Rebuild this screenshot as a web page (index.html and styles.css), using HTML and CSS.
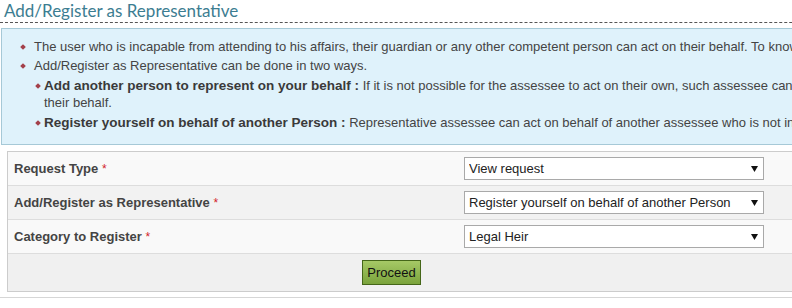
FILE: index.html
```html
<!DOCTYPE html>
<html lang="en">
<head>
<meta charset="utf-8">
<title>Add/Register as Representative</title>
<link rel="stylesheet" href="styles.css">
</head>
<body>
<div class="page">
  <h2 class="title">Add/Register as Representative</h2>
  <div class="info">
    <ul class="points">
      <li><div class="txt">The user who is incapable from attending to his affairs, their guardian or any other competent person can act on their behalf. To know more click here.</div></li>
      <li><div class="txt">Add/Register as Representative can be done in two ways.
        <ul class="sub">
          <li><div class="txt"><b>Add another person to represent on your behalf :</b> If it is not possible for the assessee to act on their own, such assessee can authorize another person to act on their behalf.</div></li>
          <li><div class="txt"><b>Register yourself on behalf of another Person :</b> Representative assessee can act on behalf of another assessee who is not in a position to act on their own.</div></li>
        </ul>
      </div></li>
    </ul>
  </div>

  <form class="form">
    <div class="row">
      <label class="lbl" for="reqType">Request Type <span class="req">*</span></label>
      <div class="sel">
        <select id="reqType"><option>View request</option></select>
        <svg class="arrow" width="7" height="6" viewBox="0 0 7 6"><polygon points="0,0 7,0 3.5,6" fill="#111"/></svg>
      </div>
    </div>
    <div class="row alt">
      <label class="lbl" for="addReg">Add/Register as Representative <span class="req">*</span></label>
      <div class="sel">
        <select id="addReg"><option>Register yourself on behalf of another Person</option></select>
        <svg class="arrow" width="7" height="6" viewBox="0 0 7 6"><polygon points="0,0 7,0 3.5,6" fill="#111"/></svg>
      </div>
    </div>
    <div class="row">
      <label class="lbl" for="cat">Category to Register <span class="req">*</span></label>
      <div class="sel">
        <select id="cat"><option>Legal Heir</option></select>
        <svg class="arrow" width="7" height="6" viewBox="0 0 7 6"><polygon points="0,0 7,0 3.5,6" fill="#111"/></svg>
      </div>
    </div>
    <div class="actions">
      <button type="button" class="btn">Proceed</button>
    </div>
  </form>
  <div class="sep"></div>
</div>
</body>
</html>
```

FILE: styles.css
```css
html, body {
  margin: 0;
  padding: 0;
  background: #fff;
  overflow: hidden;
}
body {
  font-family: "Liberation Sans", Arial, sans-serif;
  color: #444;
}
.page {
  width: 1032px;
}
.title {
  margin: 0;
  padding: 0 0 0 4px;
  font-family: Lato, "Open Sans", sans-serif;
  font-weight: 400;
  font-size: 17px;
  line-height: 22px;
  color: #3c7d91;
  border-bottom: 1px dashed #555;
}
.info {
  margin: 5px 0 0 1px;
  border: 1px solid #a6c9d7;
  background: #dff2fb;
  padding: 8px 11px 13px 0;
}
.points {
  list-style: none;
  margin: 0;
  padding: 0 0 0 19px;
  font-size: 13px;
  line-height: 19px;
  color: #444;
}
.points li {
  display: flex;
}
.points li::before {
  content: "";
  flex: none;
  width: 4px;
  height: 4px;
  background: #a3404a;
  transform: rotate(45deg);
  margin: 8px 9px 0 0;
}
.points .txt {
  flex: 1;
}
.sub {
  list-style: none;
  margin: 2px 0 0;
  padding: 0 0 0 2px;
  line-height: 17px;
}
.sub li + li {
  margin-top: 3px;
}
.points .sub li::before {
  margin: 7px 4px 0 0;
}
.sub b {
  font-size: 13.5px;
  color: #3a3a3a;
}
.form {
  margin: 6px 0 0 7px;
  border: 1px solid #ccc;
}
.row {
  display: grid;
  grid-template-columns: 456px 300px;
  align-items: center;
  height: 33px;
  border-bottom: 1px solid #ddd;
  background: #f9f9f9;
}
.row.alt {
  background: #f2f2f2;
}
.lbl {
  padding-left: 6px;
  font-size: 13px;
  font-weight: bold;
  color: #444;
}
.req {
  color: #d2232a;
  font-weight: normal;
  font-size: 12px;
}
.sel {
  position: relative;
  height: 23px;
}
.sel select {
  -webkit-appearance: none;
  appearance: none;
  box-sizing: border-box;
  width: 300px;
  height: 23px;
  margin: 0;
  border: 1px solid #a9a9a9;
  border-radius: 0;
  background: #fff;
  padding: 0 0 0 4px;
  font-family: "Liberation Sans", Arial, sans-serif;
  font-size: 13px;
  color: #222;
}
.arrow {
  position: absolute;
  right: 6px;
  top: 9px;
}
.actions {
  height: 37px;
  display: flex;
  align-items: center;
  padding-left: 354px;
  background: #f0f0f0;
}
.btn {
  box-sizing: border-box;
  width: 59px;
  height: 25px;
  padding: 0;
  border: 1px solid #456619;
  border-radius: 0;
  background: linear-gradient(#a6c966, #7aa33c);
  font-family: "Liberation Sans", Arial, sans-serif;
  font-size: 13px;
  color: #111;
}
.sep {
  margin-top: 5px;
  border-top: 1px solid #d6d6d6;
}
```
